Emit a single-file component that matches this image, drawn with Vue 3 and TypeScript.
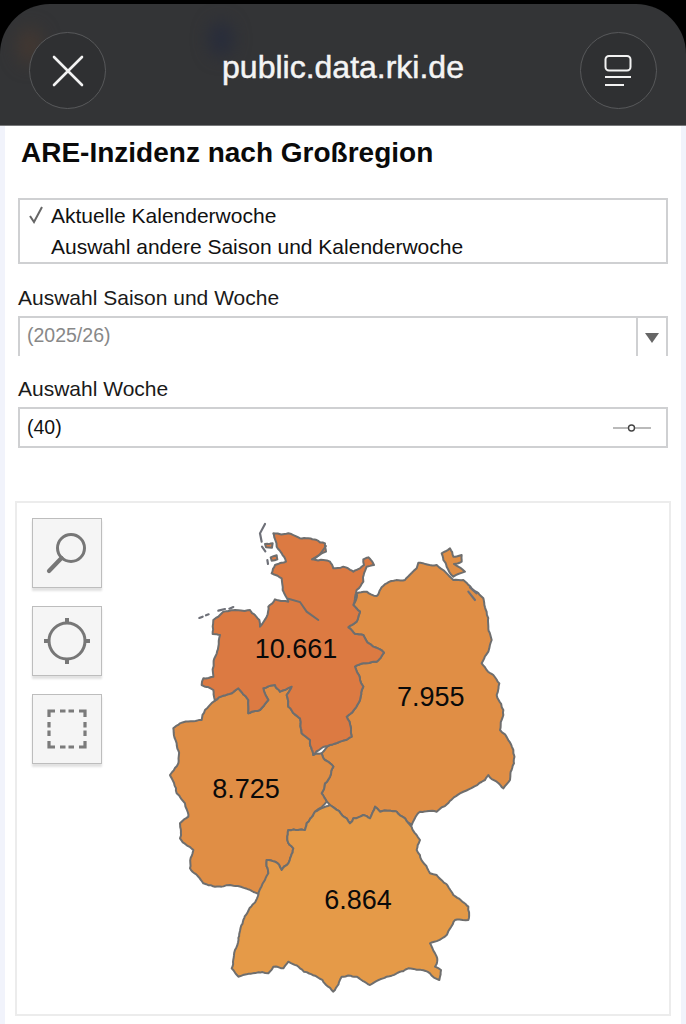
<script setup lang="ts">
type Pt = [number, number]

// outlines traced from the reference, in units of a third of a pixel
const nord: Pt[] = [[340,70],[385,70],[420,85],[470,90],[495,100],[498,125],[478,135],[458,148],[490,150],[510,155],[520,175],[550,170],[580,185],[600,175],[612,165],[610,148],[625,142],[642,165],[620,170],[612,190],[610,215],[590,240],[585,262],[580,285],[600,305],[590,335],[565,352],[585,372],[610,375],[640,410],[672,428],[650,455],[610,460],[585,470],[600,510],[610,530],[600,570],[560,620],[575,680],[510,705],[460,735],[450,690],[425,670],[420,625],[385,590],[380,555],[395,530],[360,545],[345,525],[310,535],[325,570],[300,600],[265,610],[265,570],[235,535],[215,550],[165,572],[160,540],[125,525],[130,505],[160,500],[175,410],[180,375],[158,372],[160,330],[190,305],[270,300],[298,330],[300,350],[320,320],[325,290],[345,268],[385,275],[368,240],[365,205],[335,190],[345,165],[378,155],[365,130],[350,110]]
const ost: Pt[] = [[590,250],[620,245],[650,258],[680,220],[735,210],[770,175],[775,158],[830,165],[860,190],[880,210],[910,210],[935,235],[970,265],[975,292],[985,350],[995,390],[985,425],[965,460],[1000,495],[1018,520],[1010,555],[1030,600],[1020,660],[1060,720],[1062,760],[1050,810],[1030,835],[1010,815],[985,795],[975,810],[900,850],[830,905],[780,905],[755,945],[735,925],[710,905],[660,905],[645,890],[630,925],[610,915],[580,925],[570,940],[560,925],[510,885],[495,865],[485,850],[495,820],[510,800],[520,770],[495,750],[485,730],[510,705],[575,680],[560,620],[600,570],[610,530],[600,510],[585,470],[610,460],[650,455],[672,428],[640,410],[610,375],[585,372],[565,352],[590,335],[600,305],[580,285]]
const west: Pt[] = [[40,655],[60,640],[125,630],[135,600],[165,572],[215,550],[235,535],[265,570],[265,610],[300,600],[325,570],[310,535],[345,525],[360,545],[395,530],[380,555],[385,590],[420,625],[425,670],[450,690],[460,735],[485,730],[495,750],[520,770],[510,800],[495,820],[485,850],[500,875],[465,905],[440,940],[435,960],[385,960],[382,990],[400,1015],[385,1060],[365,1080],[345,1055],[320,1050],[325,1090],[300,1155],[210,1125],[165,1130],[130,1120],[90,1075],[100,1020],[60,985],[60,940],[85,920],[75,880],[50,850],[30,795],[55,760],[50,700]]
const sued: Pt[] = [[510,885],[560,925],[570,940],[580,925],[610,915],[630,925],[645,890],[660,905],[710,905],[735,925],[780,990],[770,1020],[810,1090],[830,1095],[880,1155],[925,1190],[925,1230],[885,1230],[860,1275],[810,1300],[832,1350],[825,1370],[843,1380],[838,1410],[810,1390],[745,1375],[680,1400],[630,1425],[590,1400],[545,1400],[520,1445],[470,1400],[420,1375],[385,1355],[370,1375],[340,1370],[325,1390],[235,1400],[215,1375],[225,1320],[250,1230],[295,1155],[325,1090],[320,1050],[345,1055],[365,1080],[385,1060],[400,1015],[382,990],[385,960],[435,960],[440,940],[465,905]]
const ruegen: Pt[] = [[845,130],[870,115],[880,140],[905,135],[905,155],[882,162],[915,185],[880,200],[860,170],[850,150]]
const inseln: Pt[] = [[315,102],[338,100],[336,113],[318,112]]
const foehr: Pt[] = [[332,142],[350,136],[352,148],[335,152]]
const strokes: string[] = [
  'M118 324 L128 320', 'M138 316 L146 313', 'M175 302 L195 297', 'M208 296 L220 291',
  'M322 150 L324 162', 'M306 110 L316 124', 'M305 95 L300 70 L315 42',
  'M930 232 L950 250 M925 245 L945 270',
]

// rough edge: the offset depends only on both ends, so a shared border stays shared
const wobble = (x: number, y: number) => {
  const h = Math.sin(x * 12.9898 + y * 78.233) * 43758.5453
  return h - Math.floor(h) - 0.5
}

const edge = (p: Pt, q: Pt): string => {
  const len = Math.hypot(q[0] - p[0], q[1] - p[1])
  if (len < 11) return `L${q[0].toFixed(1)} ${q[1].toFixed(1)} `
  const sx = p[0] + q[0]
  const sy = p[1] + q[1]
  const mid: Pt = [sx / 2 + wobble(sx, sy) * len * 0.17, sy / 2 + wobble(sy, sx) * len * 0.17]
  return edge(p, mid) + edge(mid, q)
}

const toPath = (pts: Pt[]) => {
  let d = `M${pts[0][0]} ${pts[0][1]} `
  pts.forEach((p, i) => {
    d += edge(p, pts[(i + 1) % pts.length])
  })
  return d + 'Z'
}

const regions = [
  { key: 'ost', d: toPath(ost), fill: '#e08e45' },
  { key: 'ruegen', d: toPath(ruegen), fill: '#e08e45' },
  { key: 'west', d: toPath(west), fill: '#e08e45' },
  { key: 'sued', d: toPath(sued), fill: '#e59a48' },
  { key: 'nord', d: toPath(nord), fill: '#dc7a42' },
  { key: 'inseln', d: toPath(inseln), fill: '#dc7a42' },
  { key: 'foehr', d: toPath(foehr), fill: '#dc7a42' },
]

const labels = [
  { text: '10.661', x: 408, y: 443 },
  { text: '7.955', x: 812, y: 588 },
  { text: '8.725', x: 258, y: 865 },
  { text: '6.864', x: 594, y: 1198 },
]
</script>

<template>
  <div class="phone">
    <header class="sheet-bar">
      <span class="blob blob-blue"></span>
      <span class="blob blob-orange"></span>
      <button class="round-btn">
        <svg width="32" height="32" viewBox="0 0 32 32">
          <path d="M2 2 L30 30 M30 2 L2 30" stroke="#f2f2f2" stroke-width="2.6" stroke-linecap="round" />
        </svg>
      </button>
      <div class="host">public.data.rki.de</div>
      <button class="round-btn">
        <svg width="28" height="32" viewBox="0 0 28 32">
          <rect x="1.5" y="1" width="25" height="14.5" rx="3.5" fill="none" stroke="#f2f2f2" stroke-width="2" />
          <path d="M1 22 H27 M1 30 H20" stroke="#f2f2f2" stroke-width="2.2" />
        </svg>
      </button>
    </header>

    <main class="page">
      <h1 class="title">ARE-Inzidenz nach Großregion</h1>

      <div class="listbox">
        <div class="option">
          <svg class="check" width="16" height="20" viewBox="0 0 16 20">
            <path d="M2 11 L6 17 L14 2" fill="none" stroke="#666" stroke-width="2" />
          </svg>
          Aktuelle Kalenderwoche
        </div>
        <div class="option indented">Auswahl andere Saison und Kalenderwoche</div>
      </div>

      <label class="field-label first">Auswahl Saison und Woche</label>
      <div class="select-box">
        <span class="select-value">(2025/26)</span>
        <span class="select-arrow"><i></i></span>
      </div>

      <label class="field-label second">Auswahl Woche</label>
      <div class="input-box">
        <span>(40)</span>
        <svg width="40" height="10" viewBox="0 0 40 10">
          <path d="M1 5 H16 M23 5 H39" stroke="#777" stroke-width="1.2" />
          <circle cx="19.5" cy="5" r="3" fill="none" stroke="#444" stroke-width="1.4" />
        </svg>
      </div>

      <section class="chart-card">
        <div class="tools">
          <div class="tool">
            <svg width="44" height="44" viewBox="0 0 44 44">
              <circle cx="26" cy="17" r="13.5" fill="none" stroke="#777" stroke-width="3" />
              <path d="M16.5 27 L4 40" stroke="#777" stroke-width="4.2" stroke-linecap="round" />
            </svg>
          </div>
          <div class="tool">
            <svg width="48" height="48" viewBox="0 0 48 48">
              <circle cx="24" cy="24" r="18" fill="none" stroke="#777" stroke-width="3" />
              <path d="M24 1 V6 M24 42 V47 M1 24 H6 M42 24 H47" stroke="#777" stroke-width="4" />
            </svg>
          </div>
          <div class="tool">
            <svg width="40" height="40" viewBox="0 0 40 40">
              <path
                d="M2 8 V2 H8 M13 2 H18.5 M21.5 2 H27 M32 2 H38 V8 M38 13 V18.5 M38 21.5 V27 M38 32 V38 H32 M27 38 H21.5 M18.5 38 H13 M8 38 H2 V32 M2 27 V21.5 M2 18.5 V13"
                fill="none" stroke="#7b7b7b" stroke-width="3.2" />
            </svg>
          </div>
        </div>
        <svg class="map" width="370" height="490" viewBox="0 0 1110 1470">
          <path v-for="r in regions" :key="r.key" :d="r.d" :fill="r.fill" stroke="#6e6e6e" stroke-width="6" stroke-linejoin="round" />
          <path v-for="s in strokes" :key="s" :d="s" fill="none" stroke="#6e7078" stroke-width="6.5" stroke-linecap="round" />
          <path d="M385 266 L420 276 L440 305 L475 330" fill="none" stroke="#6e6e6e" stroke-width="6" stroke-linecap="round" />
          <path d="M498 108 L478 135 L456 148" fill="none" stroke="#6e6e6e" stroke-width="6" stroke-linecap="round" />
          <text v-for="l in labels" :key="l.text" class="map-label" :x="l.x" :y="l.y">{{ l.text }}</text>
        </svg>
      </section>
    </main>
  </div>
</template>

<style>
html, body {
  margin: 0;
  background: #fff;
}
</style>

<style scoped>
.phone {
  width: 686px;
  height: 1024px;
  overflow: hidden;
  background: #000;
  font-family: "Liberation Sans", Arial, sans-serif;
  padding-top: 4px;
  box-sizing: border-box;
}

.sheet-bar {
  position: relative;
  height: 122px;
  padding: 28px 29px 0;
  box-sizing: border-box;
  background: #333436;
  border-radius: 50px 50px 0 0;
  border-bottom: 1px solid #77787a;
  display: flex;
  justify-content: space-between;
  align-items: flex-start;
  overflow: hidden;
}

.blob {
  position: absolute;
  border-radius: 50%;
  filter: blur(9px);
}

.blob-blue {
  left: 210px;
  top: 18px;
  width: 22px;
  height: 34px;
  background: #262b3c;
}

.blob-orange {
  left: 18px;
  top: 24px;
  width: 24px;
  height: 36px;
  background: #443831;
}

.round-btn {
  position: relative;
  width: 77px;
  height: 77px;
  padding: 0;
  border: 1px solid #58595b;
  border-radius: 50%;
  background: #2f3032;
  display: flex;
  align-items: center;
  justify-content: center;
}

.host {
  position: relative;
  margin-top: 17px;
  color: #f4f4f4;
  font-size: 32px;
  line-height: 36px;
  -webkit-text-stroke: 0.5px #f4f4f4;
}

.page {
  height: 898px;
  padding: 9px 10px 0;
  box-sizing: border-box;
  background: #fff;
  border-left: 5px solid #f1f3fb;
  border-right: 5px solid #f1f3fb;
  color: #111;
}

.title {
  margin: 0 0 0 6px;
  font-size: 28px;
  line-height: 36px;
  font-weight: 700;
  color: #0a0a0a;
}

.listbox {
  margin: 27px 3px 0 3px;
  height: 66px;
  box-sizing: border-box;
  border: 2px solid #cfd0d2;
}

.option {
  height: 31px;
  display: flex;
  align-items: center;
  font-size: 21px;
  white-space: nowrap;
}

.indented {
  padding-left: 31px;
}

.check {
  margin: 0 7px 2px 8px;
}

.field-label {
  display: block;
  margin-left: 3px;
  font-size: 21px;
  line-height: 24px;
  color: #1a1a1a;
}

.first {
  margin-top: 22px;
}

.second {
  margin-top: 21px;
}

.select-box {
  margin: 6px 3px 0;
  height: 40px;
  box-sizing: border-box;
  border: 2px solid #cfd0d2;
  border-bottom: 0;
  display: flex;
  align-items: center;
  justify-content: space-between;
  padding-left: 7px;
  font-size: 19.5px;
  color: #888;
}

.select-value {
  margin-bottom: 4px;
}

.select-arrow {
  width: 28px;
  height: 100%;
  border-left: 2px solid #cfd0d2;
  display: flex;
  align-items: center;
  justify-content: center;
}

.select-arrow i {
  width: 0;
  height: 0;
  margin-top: 1px;
  border-left: 7px solid transparent;
  border-right: 7px solid transparent;
  border-top: 10px solid #666;
}

.input-box {
  margin: 6px 3px 0;
  height: 41px;
  box-sizing: border-box;
  border: 2px solid #cfd0d2;
  display: flex;
  align-items: center;
  justify-content: space-between;
  padding: 0 14px 0 7px;
  font-size: 19.5px;
  color: #111;
}

.chart-card {
  margin: 53px 0 0 0;
  height: 515px;
  box-sizing: border-box;
  border: 2px solid #ececec;
  display: flex;
  align-items: flex-start;
  padding: 7px 0 0 15px;
}

.tools {
  flex: none;
  margin-top: 8px;
  display: flex;
  flex-direction: column;
  gap: 18px;
}

.tool {
  width: 70px;
  height: 70px;
  box-sizing: border-box;
  background: #f5f5f5;
  border: 1.5px solid #bdbdbd;
  box-shadow: 0 3px 2px #e2e2e2;
  display: flex;
  align-items: center;
  justify-content: center;
}

.map {
  flex: none;
  margin-left: 58px;
}

.map-label {
  font-size: 81px;
  fill: #0a0a0a;
  text-anchor: middle;
  font-family: "Liberation Sans", Arial, sans-serif;
}
</style>
